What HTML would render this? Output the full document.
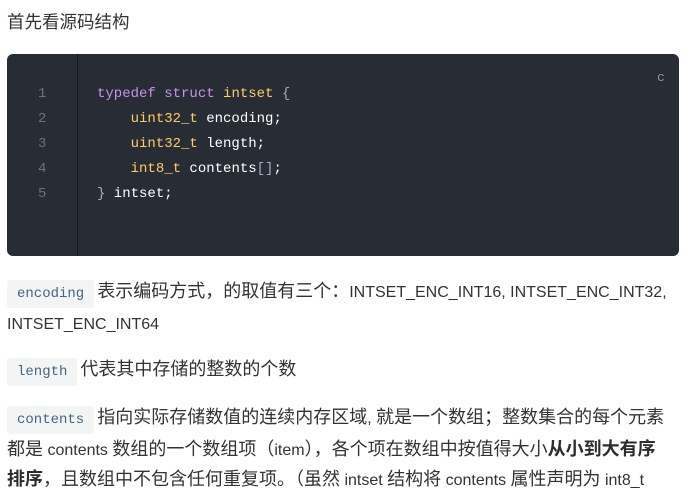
<!DOCTYPE html>
<html><head><meta charset="utf-8"><style>
body{margin:0;background:#fff;width:693px;height:496px;overflow:hidden;font-family:"Liberation Sans","Noto Sans CJK SC",sans-serif;color:#333;}
.t{position:absolute;left:7px;top:9px;font-size:17.5px;}
.code{position:absolute;left:7px;top:54px;width:672px;height:202px;background:#282c34;border-radius:6px;}
.gut{position:absolute;left:70px;top:0;width:1px;height:202px;background:#16181d;}
.ln{position:absolute;left:31px;width:12px;font-family:"Liberation Mono",monospace;font-size:14px;color:#6b717d;}
.cl{position:absolute;left:90px;font-family:"Liberation Mono","DejaVu Sans Mono",monospace;font-size:14px;color:#ffffff;white-space:pre;}
.k{color:#c792ea}.y{color:#ffcb6b}.p{color:#a7adba}
.c{position:absolute;left:650px;top:16px;color:#8a93a0;font-family:"Liberation Mono",monospace;font-size:13px;}
.para{position:absolute;left:7px;width:668px;font-size:18px;line-height:29px;}
.l{font-size:16px}
code{font-family:"Liberation Mono",monospace;font-size:14px;background:#f3f4f4;color:#476582;padding:6px 10px;border-radius:3px;margin-right:3px;}
b{font-weight:bold;color:#2c2c2c}
</style></head><body>
<div class="t">首先看源码结构</div>
<div class="code">
<div class="gut"></div>
<div class="c">c</div>
<div class="ln" style="top:32px">1</div><div class="ln" style="top:57px">2</div><div class="ln" style="top:82px">3</div><div class="ln" style="top:107px">4</div><div class="ln" style="top:132px">5</div>
<div class="cl" style="top:32px"><span class="k">typedef</span> <span class="k">struct</span> <span class="y">intset</span> <span class="p">{</span></div>
<div class="cl" style="top:57px">    <span class="y">uint32_t</span> encoding;</div>
<div class="cl" style="top:82px">    <span class="y">uint32_t</span> length;</div>
<div class="cl" style="top:107px">    <span class="y">int8_t</span> contents<span class="p">[]</span>;</div>
<div class="cl" style="top:132px"><span class="p">}</span> intset;</div>
</div>
<div class="para" style="top:277px"><code>encoding</code>表示编码方式，的取值有三个：<span class="l">INTSET_ENC_INT16, INTSET_ENC_INT32, INTSET_ENC_INT64</span></div>
<div class="para" style="top:355px"><code>length</code>代表其中存储的整数的个数</div>
<div class="para" style="top:403px"><code>contents</code>指向实际存储数值的连续内存区域<span class="l">, </span>就是一个数组；整数集合的每个元素都是<span class="l"> contents </span>数组的一个数组项（<span class="l">item</span>），各个项在数组中按值得大小<b>从小到大有序</b><br><b>排序</b>，且数组中不包含任何重复项。（虽然<span class="l"> intset </span>结构将<span class="l"> contents </span>属性声明为<span class="l"> int8_t</span></div>
</body></html>
